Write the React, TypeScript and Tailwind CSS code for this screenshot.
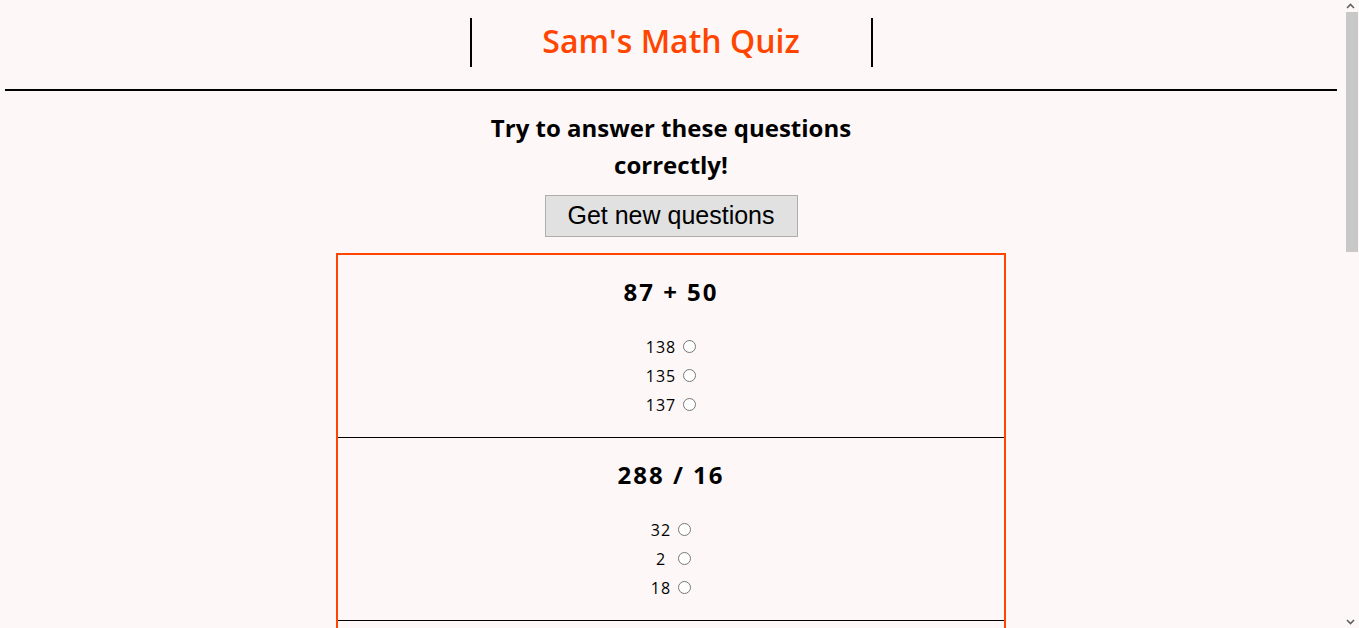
import { useState } from "react";

type Question = { text: string; options: string[] };

const questions: Question[] = [
  { text: "87 + 50", options: ["138", "135", "137"] },
  { text: "288 / 16", options: ["32", "2", "18"] },
  { text: "14 * 6", options: ["84", "80", "96"] },
  { text: "93 - 41", options: ["52", "54", "42"] },
  { text: "65 + 19", options: ["74", "84", "86"] },
];

function QuestionBlock({ q, idx }: { q: Question; idx: number }) {
  const [picked, setPicked] = useState<string | null>(null);
  return (
    <div className="border-b border-black pt-[22px] pb-[18px] last:border-b-0">
      <h2 className="text-center text-[24px] font-bold leading-[29px] tracking-[2px] text-black">
        {q.text}
      </h2>
      <div className="mt-[26px] grid grid-cols-[auto_auto] justify-center gap-x-[7px]">
        {q.options.map((o) => (
          <label key={o} className="col-span-2 grid h-[29px] grid-cols-subgrid items-center text-[16px] tracking-[1px] text-black">
            <span className="text-center">{o}</span>
            <input
              type="radio"
              name={"q" + idx}
              checked={picked === o}
              onChange={() => setPicked(o)}
              className="m-0 h-[13px] w-[13px]"
            />
          </label>
        ))}
      </div>
    </div>
  );
}

// page has more content than the window, so draw the scrollbar column
function Scrollbar() {
  return (
    <div className="flex w-[17px] shrink-0 flex-col items-center bg-[#fdf8f7]">
      <svg width="9" height="12" viewBox="0 0 9 12" className="shrink-0">
        <path d="M1 8 L4.5 4.5 L8 8" fill="none" stroke="#606060" strokeWidth="1.6" />
      </svg>
      <div className="ml-[3px] h-[240px] w-[12px] bg-[#c8c8c8]" />
      <div className="flex-1" />
      <svg width="9" height="12" viewBox="0 0 9 12" className="shrink-0">
        <path d="M1 4 L4.5 7.5 L8 4" fill="none" stroke="#606060" strokeWidth="1.6" />
      </svg>
    </div>
  );
}

export default function App() {
  return (
    <div className="flex h-screen overflow-hidden bg-[#fdf8f7] font-['Open_Sans',sans-serif]">
      <main className="min-w-0 flex-1 overflow-hidden px-[5px] pb-10">
        <header className="flex justify-center pt-[18px]">
          <div className="flex h-[49px] w-[403px] items-center justify-center border-x-2 border-black pb-1 text-[32px] font-semibold text-[#ff4500]">
            Sam's Math Quiz
          </div>
        </header>
        <hr className="mt-[22px] border-t-2 border-black" />
        <p className="mx-auto mt-[18px] w-[400px] text-center text-[24px] font-bold leading-[37px] text-black">
          Try to answer these questions correctly!
        </p>
        <div className="mt-[12px] flex justify-center">
          <button className="h-[42px] w-[253px] border border-[#adadad] bg-[#e1e1e1] font-['Liberation_Sans',sans-serif] text-[25px] text-black">
            Get new questions
          </button>
        </div>
        <div className="mx-auto mt-4 w-[670px] border-2 border-[#ff4500]">
          {questions.map((q, i) => (
            <QuestionBlock key={i} q={q} idx={i} />
          ))}
        </div>
      </main>
      <Scrollbar />
    </div>
  );
}
